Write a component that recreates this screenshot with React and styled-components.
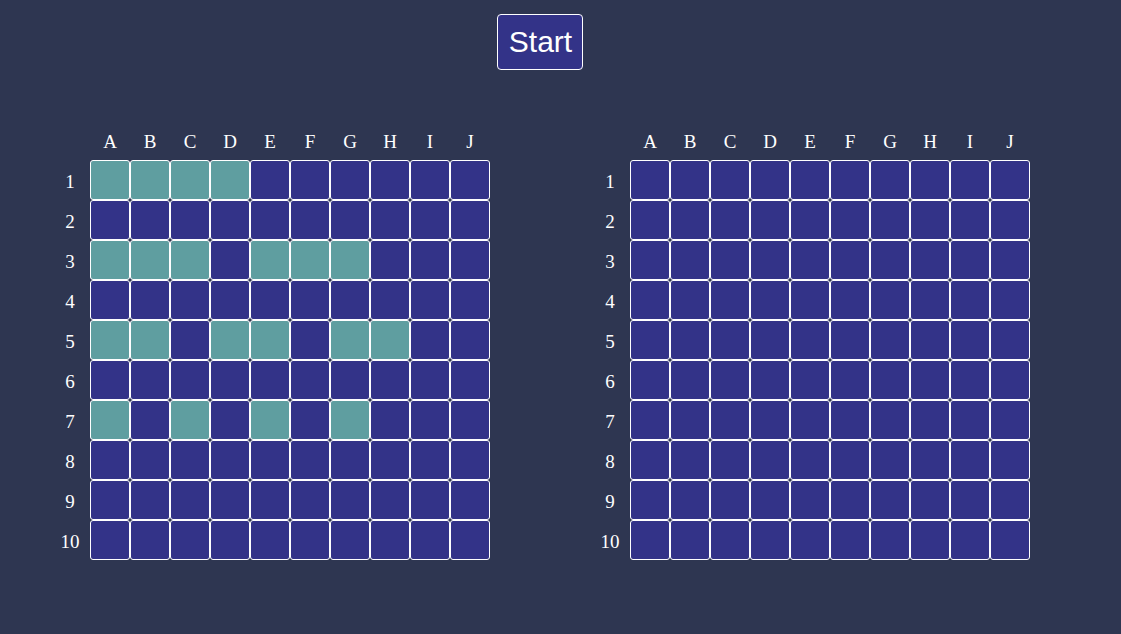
import React from "react";
import styled, { createGlobalStyle } from "styled-components";

const Global = createGlobalStyle`
  html, body { margin: 0; padding: 0; background: #2e3651; }
  body { font-family: "Liberation Serif", "Times New Roman", serif; }
`;

const Page = styled.div`
  width: 980px;
  margin-left: 50px;
  padding-top: 14px;
  display: flex;
  flex-direction: column;
  align-items: center;
`;

const StartButton = styled.button`
  font-family: "Liberation Sans", Arial, sans-serif;
  font-size: 30px;
  line-height: 34px;
  color: #ffffff;
  background: #333388;
  border: 1px solid #ffffff;
  border-radius: 4px;
  padding: 10px 10px 10px 11px;
  cursor: pointer;
`;

const Boards = styled.div`
  margin-top: 50px;
  display: flex;
  gap: 100px;
  width: 100%;
`;

const Board = styled.div`
  display: grid;
  grid-template-columns: repeat(11, 40px);
  grid-template-rows: repeat(11, 40px);
`;

const Label = styled.div`
  box-sizing: border-box;
  padding-top: 4px;
  color: #ffffff;
  font-size: 19px;
  display: flex;
  align-items: center;
  justify-content: center;
`;

const Cell = styled.div`
  box-sizing: border-box;
  border: 1px solid #ffffff;
  border-radius: 3px;
  background: ${(p) => (p.$ship ? "#5f9ea0" : "#333388")};
`;

const letters = ["A", "B", "C", "D", "E", "F", "G", "H", "I", "J"];

const ships = {
  1: ["A", "B", "C", "D"],
  3: ["A", "B", "C", "E", "F", "G"],
  5: ["A", "B", "D", "E", "G", "H"],
  7: ["A", "C", "E", "G"],
};

function Grid({ showShips }) {
  const items = [<Label key="corner" />];
  letters.forEach((l) => items.push(<Label key={"h" + l}>{l}</Label>));
  for (let r = 1; r <= 10; r++) {
    items.push(<Label key={"r" + r}>{r}</Label>);
    letters.forEach((l) =>
      items.push(
        <Cell
          key={l + r}
          $ship={showShips && ships[r] && ships[r].includes(l)}
        />
      )
    );
  }
  return <Board>{items}</Board>;
}

export default function App() {
  return (
    <>
      <Global />
      <Page>
        <StartButton>Start</StartButton>
        <Boards>
          <Grid showShips />
          <Grid />
        </Boards>
      </Page>
    </>
  );
}
